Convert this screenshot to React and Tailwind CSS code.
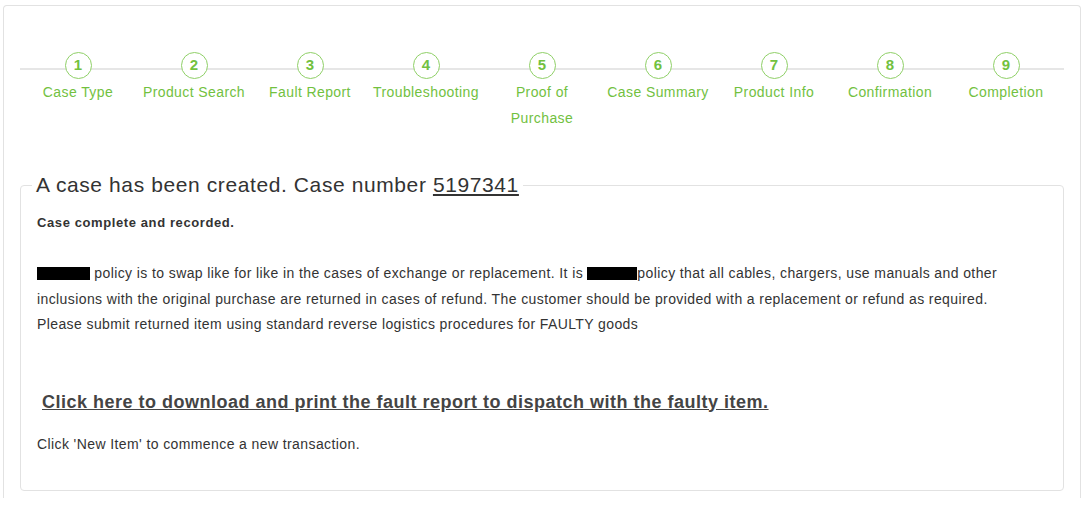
import React from "react";

const steps = [
  "Case Type",
  "Product Search",
  "Fault Report",
  "Troubleshooting",
  "Proof of Purchase",
  "Case Summary",
  "Product Info",
  "Confirmation",
  "Completion",
];

const Redacted = ({ w }) => (
  <span className={`inline-block h-[13px] bg-black align-[-2px] ${w}`}></span>
);

const App = () => {
  return (
    <div className="bg-white min-h-[508px] pt-[5px] pl-[3px] pr-[5px] font-['Liberation_Sans',Arial,sans-serif] text-[#333]">
      <div className="h-[493px] rounded-t-[4px] border border-b-0 border-[#e2e2e2] px-4 pt-[46px]">
        {/* progress steps */}
        <div className="relative">
          <div className="absolute left-0 right-0 top-[16px] h-[2px] bg-[#e6e6e6]"></div>
          <div className="relative grid grid-cols-9">
            {steps.map((label, i) => (
              <div key={label} className="flex flex-col items-center px-1">
                <div className="flex h-[27px] w-[27px] items-center justify-center rounded-full border-[1.5px] border-[#8fd067] bg-white text-[15px] font-semibold text-[#72c13f]">
                  {i + 1}
                </div>
                <div className="text-center text-[14px] leading-[26px] tracking-[0.4px] text-[#72c13f]">
                  {label}
                </div>
              </div>
            ))}
          </div>
        </div>

        <fieldset className="mt-[42px] rounded-[4px] border border-[#e2e2e2] pl-4 pr-4 pt-[17px] pb-[36px]">
          <legend className="-ml-[5px] px-1 text-[21px] leading-[24px] tracking-[0.6px] text-[#333]">
            A case has been created. Case number <span className="underline">5197341</span>
          </legend>
          <p className="text-[13px] font-bold leading-[18px] tracking-[0.6px]">
            Case complete and recorded.
          </p>
          <p className="mt-[29px] text-[14px] leading-[25.5px] tracking-[0.4px]">
            <Redacted w="w-[53px]" /> policy is to swap like for like in the cases of exchange or
            replacement. It is <Redacted w="w-[50px]" />policy that all cables, chargers, use manuals
            and other inclusions with the original purchase are returned in cases of refund. The
            customer should be provided with a replacement or refund as required.
            <br />
            Please submit returned item using standard reverse logistics procedures for FAULTY goods
          </p>
          <a
            href="#"
            className="mt-[52px] ml-[5px] block text-[18px] font-bold leading-[24px] tracking-[0.5px] text-[#444] underline"
          >
            Click here to download and print the fault report to dispatch with the faulty item.
          </a>
          <p className="mt-[20px] text-[14px] leading-[20px] tracking-[0.4px]">
            Click 'New Item' to commence a new transaction.
          </p>
        </fieldset>
      </div>
    </div>
  );
};

export default App;
